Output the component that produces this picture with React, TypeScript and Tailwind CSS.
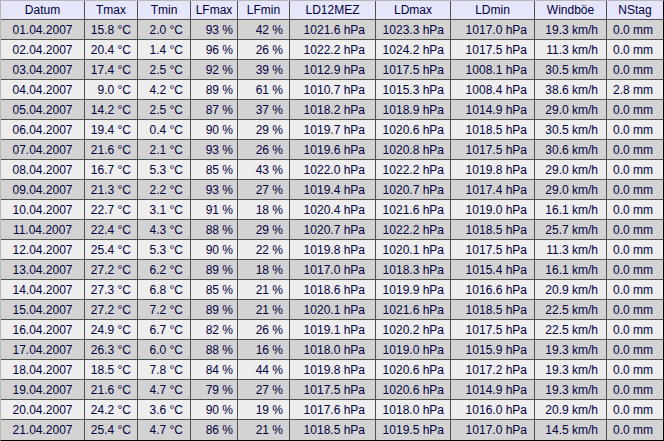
import React from "react";

const rows: string[][] = [
  ["01.04.2007", "15.8", "2.0", "93", "42", "1021.6", "1023.3", "1017.0", "19.3", "0.0"],
  ["02.04.2007", "20.4", "1.4", "96", "26", "1022.2", "1024.2", "1017.5", "11.3", "0.0"],
  ["03.04.2007", "17.4", "2.5", "92", "39", "1012.9", "1017.5", "1008.1", "30.5", "0.0"],
  ["04.04.2007", "9.0", "4.2", "89", "61", "1010.7", "1015.3", "1008.4", "38.6", "2.8"],
  ["05.04.2007", "14.2", "2.5", "87", "37", "1018.2", "1018.9", "1014.9", "29.0", "0.0"],
  ["06.04.2007", "19.4", "0.4", "90", "29", "1019.7", "1020.6", "1018.5", "30.5", "0.0"],
  ["07.04.2007", "21.6", "2.1", "93", "26", "1019.6", "1020.8", "1017.5", "30.6", "0.0"],
  ["08.04.2007", "16.7", "5.3", "85", "43", "1022.0", "1022.2", "1019.8", "29.0", "0.0"],
  ["09.04.2007", "21.3", "2.2", "93", "27", "1019.4", "1020.7", "1017.4", "29.0", "0.0"],
  ["10.04.2007", "22.7", "3.1", "91", "18", "1020.4", "1021.6", "1019.0", "16.1", "0.0"],
  ["11.04.2007", "22.4", "4.3", "88", "29", "1020.7", "1022.2", "1018.5", "25.7", "0.0"],
  ["12.04.2007", "25.4", "5.3", "90", "22", "1019.8", "1020.1", "1017.5", "11.3", "0.0"],
  ["13.04.2007", "27.2", "6.2", "89", "18", "1017.0", "1018.3", "1015.4", "16.1", "0.0"],
  ["14.04.2007", "27.3", "6.8", "85", "21", "1018.6", "1019.9", "1016.6", "20.9", "0.0"],
  ["15.04.2007", "27.2", "7.2", "89", "21", "1020.1", "1021.6", "1018.5", "22.5", "0.0"],
  ["16.04.2007", "24.9", "6.7", "82", "26", "1019.1", "1020.2", "1017.5", "22.5", "0.0"],
  ["17.04.2007", "26.3", "6.0", "88", "16", "1018.0", "1019.0", "1015.9", "19.3", "0.0"],
  ["18.04.2007", "18.5", "7.8", "84", "44", "1019.8", "1020.6", "1017.2", "19.3", "0.0"],
  ["19.04.2007", "21.6", "4.7", "79", "27", "1017.5", "1020.6", "1014.9", "19.3", "0.0"],
  ["20.04.2007", "24.2", "3.6", "90", "19", "1017.6", "1018.0", "1016.0", "20.9", "0.0"],
  ["21.04.2007", "25.4", "4.7", "86", "21", "1018.5", "1019.5", "1017.0", "14.5", "0.0"],
];

const headers = ["Datum", "Tmax", "Tmin", "LFmax", "LFmin", "LD12MEZ", "LDmax", "LDmin", "Windböe", "NStag"];
const units = ["", " °C", " °C", " %", " %", " hPa", " hPa", " hPa", " km/h", " mm"];
const widths = ["w-[84px]", "w-[53px]", "w-[53px]", "w-[47px]", "w-[52px]", "w-[86px]", "w-[75px]", "w-[84px]", "w-[72px]", "w-[56px]"];
const pads = ["", "pr-[6px]", "pr-[7px]", "pr-[4px]", "pr-[6px]", "pr-[10px]", "pr-[6px]", "pr-[7px]", "pr-[8px]", "pr-[10px]"];

export default function App() {
  return (
    <div className="w-[664px] h-[441px] bg-white" style={{ fontFamily: '"Liberation Sans", Arial, sans-serif' }}>
      <table className="table-fixed border-separate border-spacing-0 w-[664px] border-t border-l border-t-[#b8b8b8] border-l-[#b8b8b8] border-b border-r border-b-black border-r-black text-[12px] text-[#000040]">
        <colgroup>
          {widths.map((w, i) => (
            <col key={i} className={w} />
          ))}
        </colgroup>
        <thead>
          <tr className="h-[19px] bg-[#e6e6fa]">
            {headers.map((h, i) => (
              <th
                key={h}
                className={`p-0 font-normal text-center leading-none border-b border-[#505050] ${i < 9 ? "border-r" : ""}`}
              >
                {h}
              </th>
            ))}
          </tr>
        </thead>
        <tbody>
          {rows.map((r, ri) => (
            <tr key={ri} className={`h-[20px] ${ri % 2 === 0 ? "bg-[#d3d3d3]" : "bg-[#eeeeee]"}`}>
              {r.map((v, ci) => (
                <td
                  key={ci}
                  className={`p-0 leading-none whitespace-nowrap border-[#505050] ${ri < 20 ? "border-b" : ""} ${ci < 9 ? "border-r" : ""} ${ci === 0 ? "text-center" : "text-right " + pads[ci]}`}
                >
                  {v}
                  {units[ci]}
                </td>
              ))}
            </tr>
          ))}
        </tbody>
      </table>
    </div>
  );
}
